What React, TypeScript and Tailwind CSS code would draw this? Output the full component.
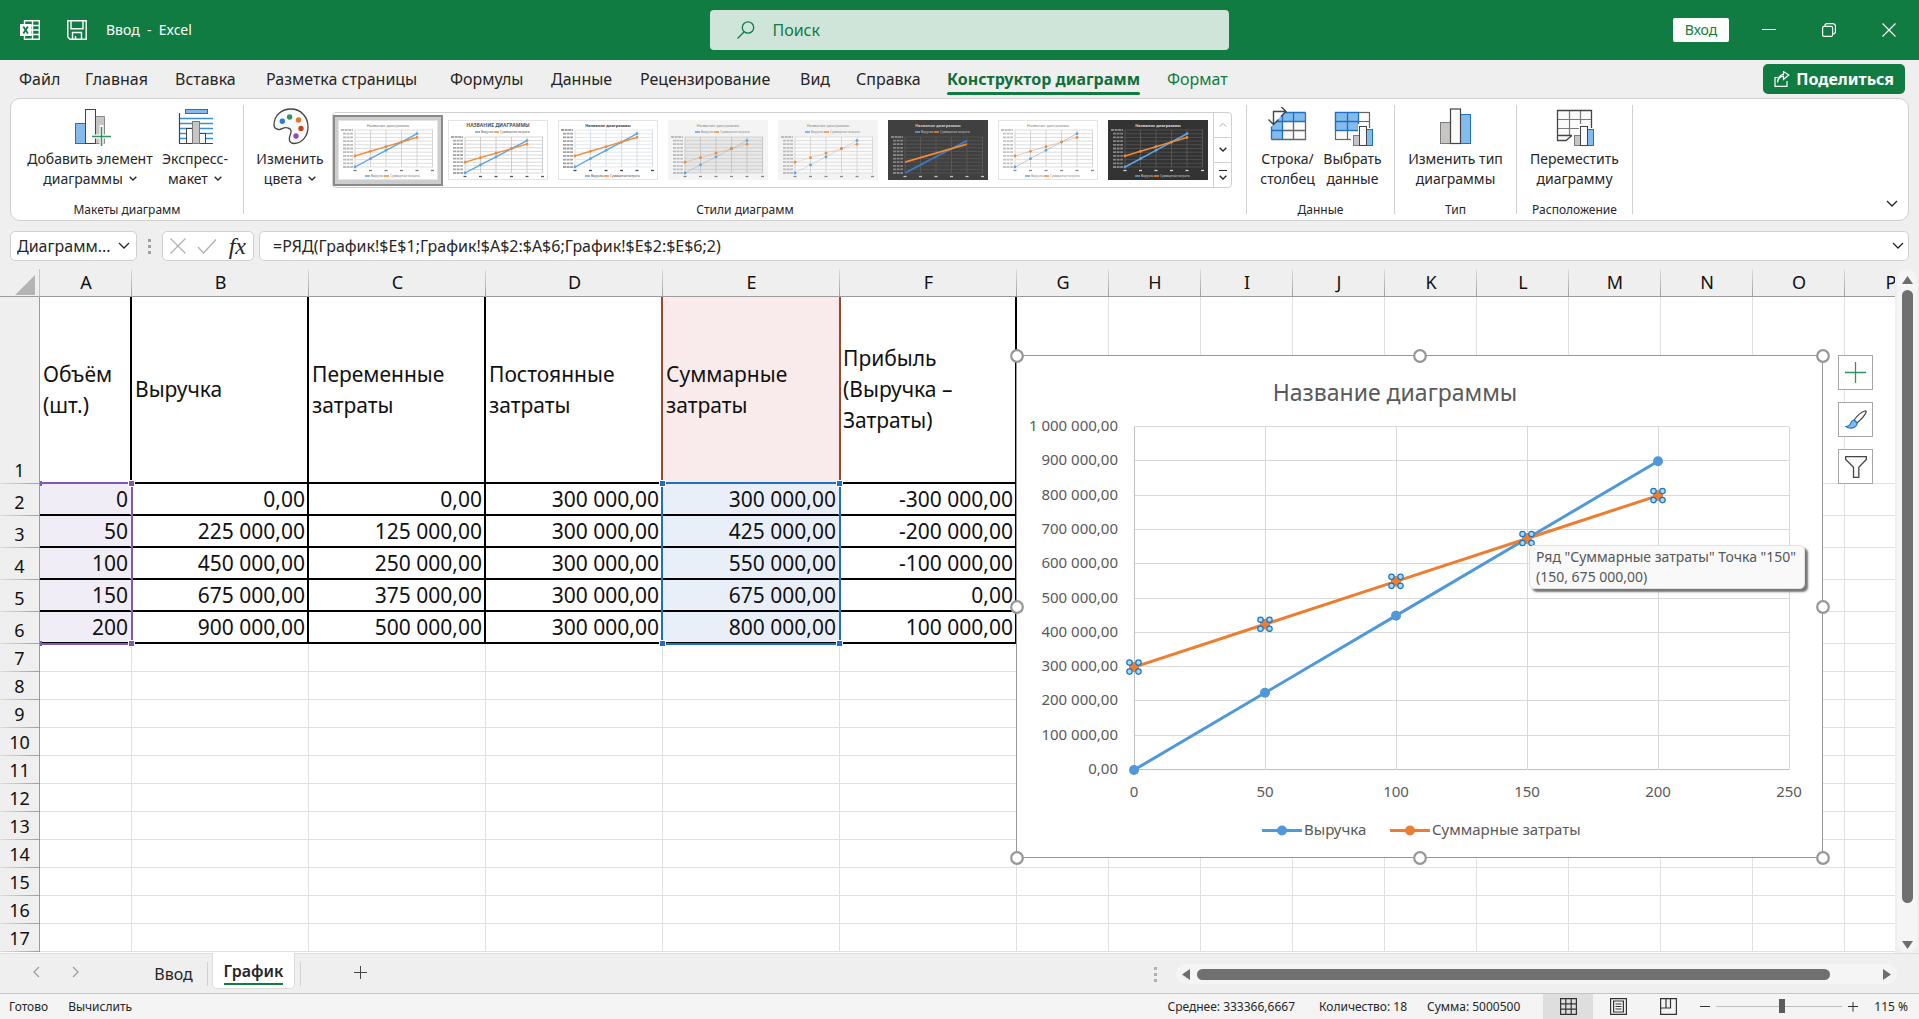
import type { ReactNode } from "react";
import clsx from "clsx";

type Row = [string, string, string, string, string, string];

const TABS = ["Файл", "Главная", "Вставка", "Разметка страницы", "Формулы", "Данные", "Рецензирование", "Вид", "Справка"];

const HEADERS: Row = [
  "Объём (шт.)",
  "Выручка",
  "Переменные затраты",
  "Постоянные затраты",
  "Суммарные затраты",
  "Прибыль (Выручка – Затраты)",
];

const ROWS: Row[] = [
  ["0", "0,00", "0,00", "300 000,00", "300 000,00", "-300 000,00"],
  ["50", "225 000,00", "125 000,00", "300 000,00", "425 000,00", "-200 000,00"],
  ["100", "450 000,00", "250 000,00", "300 000,00", "550 000,00", "-100 000,00"],
  ["150", "675 000,00", "375 000,00", "300 000,00", "675 000,00", "0,00"],
  ["200", "900 000,00", "500 000,00", "300 000,00", "800 000,00", "100 000,00"],
];

const COLUMNS = "ABCDEFGHIJKLMNOP".split("");
const EMPTY_ROWS = [7, 8, 9, 10, 11, 12, 13, 14, 15, 16, 17];

const REVENUE = [0, 225, 450, 675, 900];
const COSTS = [300, 425, 550, 675, 800];

const DARK = "#444444";
const BLUE = "#1f6fc4";
const LIGHT_BLUE = "#83bbec";

function Chevron({ className, up, bold }: { className?: string; up?: boolean; bold?: boolean }) {
  return (
    <svg viewBox="0 0 12 8" className={className} fill="none" stroke="currentColor" strokeWidth={bold ? 2 : 1.3}>
      <path d={up ? "M1 7l5-5 5 5" : "M1 1l5 5 5-5"} />
    </svg>
  );
}

/* Маленькая гистограмма в углу иконок */
function MiniBars() {
  return (
    <>
      <path d="M18 41V27h7V17h10v4h7v20z" fill="#fff" />
      <rect x="20.500" y="28.500" width="6" height="10" fill="#c8c6c4" stroke="#7a7a7a" />
      <rect x="33.500" y="22.500" width="6" height="16" fill={LIGHT_BLUE} stroke={BLUE} />
      <rect x="26.500" y="19.500" width="7" height="19" fill="#fafafa" stroke={DARK} />
    </>
  );
}

function AddElementIcon() {
  return (
    <svg viewBox="-3 0 40 40" className="size-10 shrink-0 overflow-visible">
      <rect x="2.500" y="16.500" width="10" height="20" fill={LIGHT_BLUE} stroke={BLUE} />
      <path d="M22.500 9.500h9v27h-9z" fill="#c8c6c4" stroke="#8a8a8a" />
      <rect x="12.500" y="2.500" width="10" height="34" fill="#fafafa" stroke={DARK} />
      <path d="M28.500 18v22M18 29.500h22" stroke="#fff" strokeWidth="4" />
      <path d="M28.500 20v19M19 29.500h19" stroke="#2e9460" strokeWidth="1.500" />
    </svg>
  );
}

function QuickLayoutIcon() {
  return (
    <svg viewBox="0 0 40 40" className="size-10 shrink-0">
      <path d="M5 11.500h33M5 16.500h33M5 21.500h33M5 26.500h33M5 31.500h33" stroke="#3a8fdc" strokeWidth="1.500" />
      <rect x="10.500" y="2.500" width="22" height="4" fill={LIGHT_BLUE} stroke={BLUE} />
      <path d="M4.500 6v30.500H38" fill="none" stroke={DARK} strokeWidth="1.200" />
      <rect x="11.500" y="21.500" width="6" height="15" fill="#fafafa" stroke={DARK} />
      <rect x="24.500" y="26.500" width="6" height="10" fill="#fafafa" stroke={DARK} />
      <rect x="17.500" y="14.500" width="7" height="22" fill="#c8c6c4" stroke="#7a7a7a" />
    </svg>
  );
}

function PaletteIcon() {
  return (
    <svg viewBox="0 0 40 40" className="size-10 shrink-0">
      <path
        d="M4 18C4 8 12 2 21 2c10 0 17 8 17 18 0 9-6 16.500-14 16.500-5 0-5.500-4.500-4-8 1.500-3.500 2-6.500-2-7.500-5-1.500-6 2-9.500 1.500C5.500 22 4 20.500 4 18z"
        fill="#fafafa"
        stroke={DARK}
        strokeWidth="1.300"
      />
      <circle cx="12.300" cy="14.200" r="2.700" fill="#2b7cd3" />
      <circle cx="19.600" cy="10" r="2.700" fill="#3a9160" />
      <circle cx="28.500" cy="13" r="2.700" fill="#e07a1f" />
      <circle cx="31" cy="21.500" r="2.700" fill="#c0471b" />
      <circle cx="26" cy="29" r="2.700" fill="#8b4db8" />
    </svg>
  );
}

function SwitchRowColumnIcon() {
  return (
    <svg viewBox="0 0 40 40" className="size-10 shrink-0">
      <rect x="3.500" y="5.500" width="34" height="27" fill="#fafafa" />
      <path d="M3.500 5.500h34v9h-23v18h-11z" fill={LIGHT_BLUE} />
      <path d="M25.500 14v18.500M14.500 23.500h23M3.500 32.500h34v-27" fill="none" stroke="#666" strokeWidth="1.300" />
      <path d="M14.500 5.500h23M3.500 5.500v27M14.500 5v27.500M25.500 5.500v9M3.500 14.500h34M3.500 23.500h11" stroke={BLUE} strokeWidth="1.300" />
      <path d="M-1-1h23L3 20h-4z" fill="#fff" />
      <path d="M5.500 17V4.500H18M.5 12.500l5 5 5-5M13-.5l5 5-5 5" fill="none" stroke={DARK} strokeWidth="1.400" />
    </svg>
  );
}

function SelectDataIcon() {
  return (
    <svg viewBox="0 0 40 40" className="size-10 shrink-0 overflow-visible">
      <rect x="2.500" y="5.500" width="34" height="27" fill="#fafafa" stroke="#666" strokeWidth="1.200" />
      <path d="M14.500 23v9.500M26 14.500h11M25.500 23v9.500M25.500 23.500h11" stroke="#666" strokeWidth="1.200" />
      <rect x="2.500" y="5.500" width="23" height="18" fill={LIGHT_BLUE} stroke={BLUE} strokeWidth="1.300" />
      <path d="M14.500 5.500v18M2.500 14.500h23" stroke={BLUE} strokeWidth="1.300" />
      <MiniBars />
    </svg>
  );
}

function ChangeTypeIcon() {
  return (
    <svg viewBox="0 0 40 40" className="size-10 shrink-0">
      <rect x="5.500" y="15.500" width="10" height="21" fill="#c8c6c4" stroke="#7a7a7a" />
      <rect x="25.500" y="7.500" width="10" height="29" fill={LIGHT_BLUE} stroke={BLUE} />
      <rect x="15.500" y="2" width="10" height="34.500" fill="#fafafa" stroke={DARK} strokeWidth="1.200" />
    </svg>
  );
}

function MoveChartIcon() {
  return (
    <svg viewBox="0 0 40 40" className="size-10 shrink-0 overflow-visible">
      <path d="M3.500 3.500h34v25h-34z" fill="#fafafa" />
      <path d="M15.500 3.500v25M26.500 3.500v25M3.500 12.500h34M3.500 21.500h34" stroke="#7a7a7a" strokeWidth="1.200" />
      <path d="M37.500 28.500v-25h-34v30H12l6-5H3.500" fill="none" stroke={DARK} strokeWidth="1.300" />
      <MiniBars />
    </svg>
  );
}

interface RibbonButtonProps {
  icon: ReactNode;
  top: string;
  bottom: string;
  menu?: boolean;
  className?: string;
}

function RibbonButton({ icon, top, bottom, menu, className }: RibbonButtonProps) {
  return (
    <button className={clsx("flex shrink-0 flex-col items-center pt-0.5 text-sm leading-5 whitespace-nowrap text-[#262626]", className)}>
      {icon}
      <span className="mt-0.5">{top}</span>
      <span className="flex items-center gap-1.5">
        {bottom}
        {menu && <Chevron bold className="w-2" />}
      </span>
    </button>
  );
}

function RibbonGroup({ label, className, children }: { label: string; className: string; children: ReactNode }) {
  return (
    <section className={clsx("my-1.5 flex shrink-0 flex-col justify-between border-r border-[#d0d0d0]", className)}>
      <div className="flex justify-center">{children}</div>
      <h2 className="text-center text-xs leading-2 text-[#262626]">{label}</h2>
    </section>
  );
}

interface ThumbStyle {
  bg: string;
  grid: string;
  text: string;
  plot?: string;
  legendTop?: boolean;
  line: number;
  markers: boolean;
  bold?: boolean;
  upper?: boolean;
}

const THUMBS: ThumbStyle[] = [
  { bg: "#ffffff", grid: "#d0d0d0", text: "#777777", line: 1.4, markers: true },
  { bg: "#ffffff", grid: "#c8c8c8", text: "#555555", line: 1.4, markers: true, legendTop: true, bold: true, upper: true },
  { bg: "#ffffff", grid: "#d5dcea", text: "#444444", line: 1.4, markers: true, bold: true },
  { bg: "#f4f4f4", grid: "#c4c4c4", plot: "#e8e8e8", text: "#888888", line: 0.4, markers: true, legendTop: true },
  { bg: "#f3f3f3", grid: "#d4d4d4", plot: "#fafafa", text: "#888888", line: 0.3, markers: true, legendTop: true },
  { bg: "#404040", grid: "#5a5a5a", text: "#c8c8c8", line: 1.8, markers: false, legendTop: true, bold: true },
  { bg: "#ffffff", grid: "#d0d0d0", text: "#888888", line: 0.5, markers: true },
  { bg: "#333333", grid: "#5a5a5a", text: "#d8d8d8", line: 1.6, markers: true, bold: true },
];

function Thumbnail({ style, selected }: { style: ThumbStyle; selected: boolean }) {
  const top = style.legendTop ? 17 : 10;
  const bottom = style.legendTop ? 53 : 47;
  const px = (i: number) => 17 + i * 15.5;
  const py = (v: number) => bottom - ((bottom - top) * v) / 1000;
  const points = (values: number[]) => values.map((v, i) => `${px(i)},${py(v)}`).join(" ");
  const legendY = style.legendTop ? 12 : 56;

  return (
    <button
      aria-label="Стиль диаграммы"
      className={clsx("flex h-[71px] w-[110px] items-center justify-center border-2", selected ? "border-[#8a8a8a] bg-[#cdcdcd]" : "border-transparent")}
    >
      <svg viewBox="0 0 100 60" className="h-15 w-25" fontFamily="Noto Sans, sans-serif">
        <rect x=".5" y=".5" width="99" height="59" fill={style.bg} stroke={style.bg === "#ffffff" ? "#e4e4e4" : style.bg} />
        <rect x="17" y={top} width="78" height={bottom - top} fill={style.plot ?? "none"} />
        {Array.from({ length: 11 }, (_, i) => (
          <g key={i}>
            <path d={`M17 ${py(i * 100)}h78`} stroke={style.grid} strokeWidth=".7" />
            <path d={`M${i === 10 ? 3 : 5} ${py(i * 100)}H15`} stroke={style.text} strokeWidth="1.800" strokeDasharray="3 .6" opacity=".5" />
          </g>
        ))}
        {Array.from({ length: 6 }, (_, i) => (
          <g key={i}>
            <path d={`M${px(i)} ${top}V${bottom}`} stroke={style.grid} strokeWidth=".9" />
            <path d={`M${px(i) - 1.5} ${bottom + 3.5}h3`} stroke={style.text} strokeWidth="1.300" />
          </g>
        ))}
        <polyline points={points(REVENUE)} fill="none" stroke={style.line < 1 ? "#999999" : style.legendTop && !style.markers ? "#3f78c4" : "#5ba5e6"} strokeWidth={style.line} />
        <polyline points={points(COSTS)} fill="none" stroke={style.line < 1 ? "#c8a080" : "#f08a35"} strokeWidth={style.line} />
        {style.markers &&
          REVENUE.map((v, i) => (
            <g key={i}>
              <circle cx={px(i)} cy={py(v)} r="1.400" fill="#5ba5e6" />
              <circle cx={px(i)} cy={py(COSTS[i])} r="1.400" fill="#f08a35" />
            </g>
          ))}
        <text x="50" y="7" textAnchor="middle" fontSize={style.upper ? 5 : 4} fontWeight={style.bold ? 700 : 400} fill={style.text}>
          {style.upper ? "НАЗВАНИЕ ДИАГРАММЫ" : "Название диаграммы"}
        </text>
        <path d={`M27 ${legendY}h5`} stroke="#5ba5e6" strokeWidth="1.500" />
        <path d={`M46 ${legendY}h5`} stroke="#f08a35" strokeWidth="1.500" />
        <text x="33" y={legendY + 1} fontSize="3" fill={style.text}>Выручка</text>
        <text x="52" y={legendY + 1} fontSize="3" fill={style.text}>Суммарные затраты</text>
      </svg>
    </button>
  );
}

function TitleBar() {
  return (
    <header className="flex h-15 shrink-0 items-center bg-[#107c41] text-white">
      <div className="flex flex-1 items-center pl-5">
        <svg viewBox="0 0 20 20" className="size-5">
          <path d="M4.500.8h14.800v18.400H4.500zM4.500 5.500h14.800M4.500 10h14.800M4.500 14.500h14.800M12.500.8v18.400" fill="none" stroke="#fff" strokeWidth="1.400" />
          <rect y="4" width="11.500" height="12" fill="#fff" />
          <path d="M3.300 6.500l4.600 7M7.900 6.500l-4.600 7" stroke="#107c41" strokeWidth="1.800" />
        </svg>
        <button aria-label="Сохранить" className="ml-[27px]">
          <svg viewBox="0 0 20 20" className="size-5" fill="none" stroke="#fff" strokeWidth="1.400">
            <path d="M.8.800h18.400v18.400H3L.8 17zM4 .8v8h12v-8M5.500 19v-6.500h9V19M8.500 19v-3" />
          </svg>
        </button>
        <h1 className="ml-[19px] text-sm whitespace-pre">{"Ввод  -  Excel"}</h1>
      </div>
      <label className="flex h-10 w-[27%] items-center rounded bg-[#cfe5d9] pl-[26px] text-[#107c41]">
        <svg viewBox="0 0 20 20" className="size-5" fill="none" stroke="currentColor" strokeWidth="1.300">
          <circle cx="12" cy="7.500" r="5.700" />
          <path d="M8 12l-6.500 6.500" />
        </svg>
        <input aria-label="Поиск" placeholder="Поиск" className="ml-4 flex-1 bg-transparent text-base outline-none placeholder:text-[#107c41]" />
      </label>
      <div className="flex flex-1 items-center justify-end">
        <button className="mr-2.5 h-6 w-14 rounded-xs bg-white text-sm text-[#107c41]">Вход</button>
        <button aria-label="Свернуть" className="flex w-15 justify-center">
          <svg viewBox="0 0 14 14" className="size-3.5" stroke="#fff"><path d="M0 6.500h14" /></svg>
        </button>
        <button aria-label="Свернуть в окно" className="flex w-15 justify-center">
          <svg viewBox="0 0 14 14" className="size-3.5" fill="none" stroke="#fff" strokeWidth="1.200">
            <rect x=".6" y="3.400" width="10" height="10" rx="1.500" />
            <path d="M3 3V2.500C3 1.500 3.500.6 5 .6h5.500c2 0 3 1 3 3v5c0 1.500-1 2.400-2.500 2.400" />
          </svg>
        </button>
        <button aria-label="Закрыть" className="flex w-15 justify-center">
          <svg viewBox="0 0 14 14" className="size-3.5" stroke="#fff" strokeWidth="1.200"><path d="M.5.5l13 13M13.500.5l-13 13" /></svg>
        </button>
      </div>
    </header>
  );
}

function TabBar() {
  return (
    <nav className="flex h-[38px] shrink-0 items-center justify-between pr-3.5 pl-[19px] text-base text-[#262626]">
      <div className="grid grid-cols-[66px_90px_91px_184px_101px_89px_160px_56px_91px_220px_60px] whitespace-nowrap">
        {TABS.map((tab) => (
          <button key={tab} className="text-left">{tab}</button>
        ))}
        <button className="relative justify-self-start text-left font-bold text-[#0f703b]">
          Конструктор диаграмм
          <span className="absolute inset-x-0 -bottom-1 h-[3px] rounded-full bg-[#107c41]" />
        </button>
        <button className="text-left text-[#107c41]">Формат</button>
      </div>
      <button className="flex h-[30px] items-center gap-1.5 rounded-[5px] bg-[#107c41] px-[11px] font-bold text-white">
        <svg viewBox="0 0 16 16" className="size-4" fill="none" stroke="currentColor" strokeWidth="1.200">
          <path d="M3.500 6.500H1v8.800h12V10M3.500 11.500c.5-4 2.500-6 6-6.300V8.500l5.300-4.500L9.500.6v2.600C6 4 3.800 6.500 3.500 11.500z" />
        </svg>
        Поделиться
      </button>
    </nav>
  );
}

function Ribbon() {
  return (
    <div className="mx-2.5 flex h-[123px] shrink-0 rounded-[10px] border border-[#d0d0d0] bg-white">
      <RibbonGroup label="Макеты диаграмм" className="w-[233px]">
        <RibbonButton className="w-[136px]" icon={<AddElementIcon />} top="Добавить элемент" bottom="диаграммы" menu />
        <RibbonButton className="w-[74px]" icon={<QuickLayoutIcon />} top="Экспресс-" bottom="макет" menu />
      </RibbonGroup>

      <RibbonGroup label="Стили диаграмм" className="w-[1003px]">
        <RibbonButton className="w-[84px]" icon={<PaletteIcon />} top="Изменить" bottom="цвета" menu />
        <div className="mt-[7px] mr-2.5 flex h-[76px] rounded border border-[#d0d0d0]">
          <div className="flex items-center">
            {THUMBS.map((style, i) => (
              <Thumbnail key={i} style={style} selected={i === 0} />
            ))}
          </div>
          <div className="flex w-[18px] flex-col divide-y divide-[#d0d0d0] border-l border-[#d0d0d0] text-[#262626]">
            <button aria-label="Предыдущая строка" className="flex flex-1 items-center justify-center text-[#a0a0a0]"><Chevron up className="w-2" /></button>
            <button aria-label="Следующая строка" className="flex flex-1 items-center justify-center"><Chevron bold className="w-2" /></button>
            <button aria-label="Все стили" className="flex flex-1 flex-col items-center justify-center gap-1">
              <span className="h-px w-2 bg-[#262626]" />
              <Chevron bold className="w-2" />
            </button>
          </div>
        </div>
      </RibbonGroup>

      <RibbonGroup label="Данные" className="w-[148px]">
        <RibbonButton className="w-[66px]" icon={<SwitchRowColumnIcon />} top="Строка/" bottom="столбец" />
        <RibbonButton className="mr-0.5 w-[64px]" icon={<SelectDataIcon />} top="Выбрать" bottom="данные" />
      </RibbonGroup>
      <RibbonGroup label="Тип" className="w-[122px]">
        <RibbonButton icon={<ChangeTypeIcon />} top="Изменить тип" bottom="диаграммы" />
      </RibbonGroup>
      <RibbonGroup label="Расположение" className="w-[116px]">
        <RibbonButton icon={<MoveChartIcon />} top="Переместить" bottom="диаграмму" />
      </RibbonGroup>
      <button aria-label="Свернуть ленту" className="mr-2.5 mb-3 ml-auto self-end text-[#262626]"><Chevron className="w-3" /></button>
    </div>
  );
}

function FormulaBar() {
  return (
    <div className="mx-2.5 mt-2.5 mb-2 flex h-[30px] shrink-0 text-base text-[#262626]">
      <div className="flex w-[127px] items-center rounded-[5px] border border-[#d0d0d0] bg-white px-1.5">
        <select aria-label="Имя" className="min-w-0 flex-1 appearance-none outline-none">
          <option>Диаграмм...</option>
        </select>
        <Chevron className="w-3" />
      </div>
      <div className="flex w-[25px] flex-col items-center justify-center gap-[3px]">
        <span className="size-[3px] bg-[#a0a0a0]" />
        <span className="size-[3px] bg-[#a0a0a0]" />
        <span className="size-[3px] bg-[#a0a0a0]" />
      </div>
      <div className="flex w-[92px] items-center justify-between rounded-[5px] border border-[#d0d0d0] bg-white px-[7px]">
        <button aria-label="Отмена"><svg viewBox="0 0 16 16" className="size-4" stroke="#b0b0b0" strokeWidth="1.200"><path d="M.5.5l15 15M15.500.5l-15 15" /></svg></button>
        <button aria-label="Ввод"><svg viewBox="0 0 20 16" className="h-4 w-5" fill="none" stroke="#b0b0b0" strokeWidth="1.300"><path d="M1 9l5.500 6L19 1.500" /></svg></button>
        <button aria-label="Вставить функцию" className="font-['Liberation_Serif',serif] text-2xl leading-6 italic">fx</button>
      </div>
      <div className="ml-[5px] flex flex-1 items-center rounded-[5px] border border-[#d0d0d0] bg-white pr-1 pl-[13px]">
        <input aria-label="Строка формул" className="flex-1 outline-none" defaultValue="=РЯД(График!$E$1;График!$A$2:$A$6;График!$E$2:$E$6;2)" />
        <Chevron className="w-3" />
      </div>
    </div>
  );
}

function RowHeader({ children }: { children: ReactNode }) {
  return (
    <th className="relative border-r border-[#9b9b9b] bg-[#efefef] p-0 align-bottom text-lg leading-7 font-normal">
      {children}
      <span className="absolute inset-x-0 bottom-0 h-px bg-linear-to-r from-[#dedede] to-[#a0a0a0]" />
    </th>
  );
}

function SheetTable() {
  return (
    <table className="w-[1937px] table-fixed border-separate border-spacing-0 bg-white text-[#111]">
      <colgroup>
        <col className="w-10" />
        <col className="w-[92px]" />
        {COLUMNS.slice(1, 6).map((c) => (
          <col key={c} className="w-[177px]" />
        ))}
        {COLUMNS.slice(6).map((c) => (
          <col key={c} className="w-[92px]" />
        ))}
      </colgroup>
      <thead>
        <tr className="h-7">
          <th className="border-r border-b border-r-[#c4c4c4] border-b-[#9b9b9b] bg-[#efefef] p-0">
            <svg viewBox="0 0 20 20" className="mt-1 mr-1 ml-auto size-5"><path d="M20 0v20H0z" fill="#b4b4b4" /></svg>
          </th>
          {COLUMNS.map((c) => (
            <th key={c} className="relative border-b border-[#9b9b9b] bg-[#efefef] p-0 text-lg leading-[27px] font-normal">
              {c}
              <span className="absolute inset-y-0 right-0 w-px bg-linear-to-b from-[#dedede] to-[#a0a0a0]" />
            </th>
          ))}
        </tr>
      </thead>
      <tbody>
        <tr className="h-[187px]">
          <RowHeader>1</RowHeader>
          {HEADERS.map((text, i) => (
            <td
              key={text}
              className={clsx(
                "border-r-2 border-b-2 border-black p-0 pl-[3px] align-middle text-[21px] leading-[31px]",
                i === 4 && "border-r-transparent bg-[#f9ebeb]",
              )}
            >
              {text}
            </td>
          ))}
          {COLUMNS.slice(6).map((c) => (
            <td key={c} className="border-r border-b border-[#e0e0e0] p-0" />
          ))}
        </tr>
        {ROWS.map((row, r) => (
          <tr key={r} className="h-8">
            <RowHeader>{r + 2}</RowHeader>
            {row.map((value, i) => (
              <td
                key={i}
                className={clsx(
                  "border-r-2 border-b-2 border-black p-0 pr-0.5 text-right text-[21px] leading-7",
                  i === 0 && "border-r-transparent bg-[#f1edf7]",
                  i === 4 && "border-r-transparent bg-[#e9eff8]",
                )}
              >
                {value}
              </td>
            ))}
            {COLUMNS.slice(6).map((c) => (
              <td key={c} className="border-r border-b border-[#e0e0e0] p-0" />
            ))}
          </tr>
        ))}
        {EMPTY_ROWS.map((n) => (
          <tr key={n} className="h-7">
            <RowHeader>{n}</RowHeader>
            {COLUMNS.map((c) => (
              <td key={c} className="border-r border-b border-[#e0e0e0] p-0" />
            ))}
          </tr>
        ))}
      </tbody>
    </table>
  );
}

/* Цветные рамки диапазонов, на которые ссылается ряд */
function RangeOutlines() {
  return (
    <>
      <div className="absolute top-7 left-[661px] h-[187px] w-[180px] border-x-2 border-[#a0452a]" />
      <div className="absolute top-[213px] left-10 h-[163px] w-[93px] border-y-2 border-r-2 border-[#8257b5]">
        <span className="absolute -top-[3px] -right-[3px] size-[5px] bg-[#8257b5] outline outline-white" />
        <span className="absolute -right-[3px] -bottom-[3px] size-[5px] bg-[#8257b5] outline outline-white" />
        <span className="absolute -top-[3px] left-0 h-[5px] w-0.5 bg-[#8257b5]" />
        <span className="absolute -bottom-[3px] left-0 h-[5px] w-0.5 bg-[#8257b5]" />
      </div>
      <div className="absolute top-[213px] left-[661px] h-[163px] w-[180px] border-2 border-[#1f6fc4]">
        <span className="absolute -top-[3px] -left-[3px] size-[5px] bg-[#1f6fc4] outline outline-white" />
        <span className="absolute -top-[3px] -right-[3px] size-[5px] bg-[#1f6fc4] outline outline-white" />
        <span className="absolute -bottom-[3px] -left-[3px] size-[5px] bg-[#1f6fc4] outline outline-white" />
        <span className="absolute -right-[3px] -bottom-[3px] size-[5px] bg-[#1f6fc4] outline outline-white" />
      </div>
    </>
  );
}

const X0 = 117;
const Y0 = 414;
const xAt = (i: number) => X0 + i * 131;
const yAt = (v: number) => Y0 - (v * 343) / 1000;
const linePoints = (values: number[]) => values.map((v, i) => `${xAt(i)},${yAt(v)}`).join(" ");
const axisLabel = (v: number) => (v === 0 ? "0,00" : v === 1000 ? "1 000 000,00" : `${v} 000,00`);

const HANDLES = [
  [0, 0], [403, 0], [806, 0],
  [0, 251], [806, 251],
  [0, 502], [403, 502], [806, 502],
];

function Chart() {
  return (
    <div className="absolute top-[87px] left-[1017px]">
      <svg viewBox="0 0 806 502" className="h-[502px] w-[806px] overflow-visible" fontFamily="Noto Sans, Liberation Sans, sans-serif" fill="#595959">
        <rect x="-.5" y="-.5" width="806" height="502" fill="#fff" stroke="#979797" />
        <text x="378" y="45" textAnchor="middle" fontSize="23">Название диаграммы</text>
        {Array.from({ length: 11 }, (_, i) => (
          <g key={i}>
            <path d={`M${X0} ${Math.round(yAt(i * 100)) - 0.5}h655`} stroke={i === 0 ? "#bfbfbf" : "#d9d9d9"} />
            <text x="101" y={yAt(i * 100) + 4} textAnchor="end" fontSize="15">{axisLabel(i * 100)}</text>
          </g>
        ))}
        {Array.from({ length: 6 }, (_, i) => (
          <g key={i}>
            <path d={`M${xAt(i) + 0.5} 71V414`} stroke={i === 0 ? "#bfbfbf" : "#d9d9d9"} />
            <text x={xAt(i)} y="441" textAnchor="middle" fontSize="15">{i * 50}</text>
          </g>
        ))}
        <polyline points={linePoints(REVENUE)} fill="none" stroke="#4f98d9" strokeWidth="3" />
        {REVENUE.map((v, i) => (
          <circle key={i} cx={xAt(i)} cy={yAt(v)} r="5" fill="#4f98d9" />
        ))}
        <polyline points={linePoints(COSTS)} fill="none" stroke="#ed7d31" strokeWidth="3" />
        {COSTS.map((v, i) => (
          <g key={i}>
            <rect x={xAt(i) - 5} y={yAt(v) - 5} width="10" height="10" fill="#7a7a7a" />
            <circle cx={xAt(i)} cy={yAt(v)} r="5" fill="#ed7d31" />
            {[-4.5, 4.5].map((dx) =>
              [-4.5, 4.5].map((dy) => (
                <circle key={`${dx}${dy}`} cx={xAt(i) + dx} cy={yAt(v) + dy} r="2.700" fill="#a8dcf8" stroke="#1c74c4" strokeWidth="1.200" />
              )),
            )}
          </g>
        ))}
        <path d="M245 474.500h40" stroke="#4f98d9" strokeWidth="3" />
        <circle cx="265" cy="474.500" r="5" fill="#4f98d9" />
        <text x="287" y="479" fontSize="15">Выручка</text>
        <path d="M373 474.500h40" stroke="#ed7d31" strokeWidth="3" />
        <circle cx="393" cy="474.500" r="5" fill="#ed7d31" />
        <text x="415" y="479" fontSize="15">Суммарные затраты</text>
        {HANDLES.map(([x, y]) => (
          <circle key={`${x}-${y}`} cx={x} cy={y} r="5.800" fill="#fff" stroke="#979797" strokeWidth="2.200" />
        ))}
      </svg>

      <div role="tooltip" className="absolute top-[189px] left-[512px] rounded-[5px] border border-[#e0e0e0] bg-[#f9f9f9] px-1.5 py-px pr-2 text-sm leading-5 whitespace-nowrap text-[#575757] shadow-[3px_3px_2px_#777]">
        <p>Ряд "Суммарные затраты" Точка "150"</p>
        <p>(150, 675 000,00)</p>
      </div>

      <div className="absolute top-[-1px] left-[821px] flex flex-col gap-3">
        <button aria-label="Элементы диаграммы" className="flex size-[35px] items-center justify-center border border-[#a6a6a6] bg-white">
          <svg viewBox="0 0 22 22" className="size-[22px]" stroke="#2e9460" strokeWidth="1.300"><path d="M10.500 0v21M0 10.500h21" /></svg>
        </button>
        <button aria-label="Стили диаграмм" className="flex size-[35px] items-center justify-center border border-[#a6a6a6] bg-white">
          <svg viewBox="0 0 22 22" className="size-[22px]" strokeWidth="1.200">
            <path d="M9 11C12 7 16 3 20 2c1-.2 1.500.5 1 1.500C19.500 7 15.500 11 12 14z" fill="#fafafa" stroke={DARK} />
            <path d="M9 11c-3 .5-3 3-4 4.500S2.500 17.500 1 17.500c3 2.500 8 2 10-.5 1-1.200 1.200-2 1-3.200z" fill={LIGHT_BLUE} stroke={BLUE} />
          </svg>
        </button>
        <button aria-label="Фильтры диаграммы" className="flex size-[35px] items-center justify-center border border-[#a6a6a6] bg-white">
          <svg viewBox="0 0 22 22" className="size-[22px]" fill="#fafafa" stroke={DARK} strokeWidth="1.300">
            <path d="M.7.700h20.600V3.500l-7.500 7.800V21.300H8.500V11.300L.7 3.500z" />
          </svg>
        </button>
      </div>
    </div>
  );
}

function VerticalScrollbar() {
  return (
    <div className="flex w-6 flex-col items-center bg-[#efefef]">
      <div className="flex h-full w-5 flex-col items-center rounded-full bg-[#f5f5f5] pt-[7px] pb-1">
        <svg viewBox="0 0 11 8" className="mb-1.5 w-[11px]"><path d="M5.500 0L11 8H0z" fill="#6e6e6e" /></svg>
        <div className="w-[11px] grow-[612] rounded-full bg-[#707070]" />
        <div className="grow-[38]" />
        <svg viewBox="0 0 11 8" className="w-[11px]"><path d="M5.500 8L11 0H0z" fill="#6e6e6e" /></svg>
      </div>
    </div>
  );
}

function SheetTabs() {
  return (
    <div className="flex h-10 shrink-0 items-start border-t border-[#dcdcdc] text-[#262626]">
      <div className="flex h-9 w-[140px] items-center gap-7 pl-[30px] text-[#a0a0a0]">
        <button aria-label="Предыдущий лист"><Chevron className="h-2 w-3 rotate-90" /></button>
        <button aria-label="Следующий лист"><Chevron className="h-2 w-3 -rotate-90" /></button>
      </div>
      <button className="mt-2 h-6 w-[68px] border-r border-[#d0d0d0] text-base leading-6">Ввод</button>
      <button className="-mt-px ml-1 flex h-9 w-[83px] flex-col items-center rounded-b-[5px] border border-t-0 border-[#dcdcdc] bg-white pt-1.5 text-base leading-6 font-semibold">
        <span className="border-b-2 border-[#107c41]">График</span>
      </button>
      <div className="mt-2 ml-[5px] h-6 w-px bg-[#d0d0d0]" />
      <button aria-label="Новый лист" className="mt-3 ml-[53px]">
        <svg viewBox="0 0 13 13" className="size-[13px]" stroke="#444"><path d="M6.500 0v13M0 6.500h13" /></svg>
      </button>
      <div className="mt-[13px] ml-auto flex flex-col gap-[3px]">
        <span className="size-[3px] bg-[#b0b0b0]" />
        <span className="size-[3px] bg-[#b0b0b0]" />
        <span className="size-[3px] bg-[#b0b0b0]" />
      </div>
      <div className="mt-2.5 mr-[22px] ml-[19px] flex h-5 w-[721px] items-center rounded-full bg-[#f5f5f5] px-1.5">
        <svg viewBox="0 0 8 11" className="h-[11px] w-2"><path d="M0 5.500L8 0v11z" fill="#6e6e6e" /></svg>
        <div className="ml-[7px] h-[11px] w-[633px] rounded-full bg-[#707070]" />
        <svg viewBox="0 0 8 11" className="ml-auto h-[11px] w-2"><path d="M8 5.500L0 0v11z" fill="#6e6e6e" /></svg>
      </div>
    </div>
  );
}

function StatusBar() {
  return (
    <footer className="flex h-[26px] shrink-0 items-center border-t border-[#c6c6c6] bg-[#f4f4f4] pr-[11px] pl-[9px] text-xs whitespace-nowrap text-[#262626]">
      <span>Готово</span>
      <span className="ml-5">Вычислить</span>
      <span className="ml-auto">Среднее: 333366,6667</span>
      <span className="ml-6">Количество: 18</span>
      <span className="ml-5">Сумма: 5000500</span>
      <div className="ml-[23px] flex h-full">
        <button aria-label="Обычный" className="flex w-[50px] items-center justify-center bg-[#dedede]">
          <svg viewBox="0 0 17 17" className="size-[17px]" fill="none" stroke="#333" strokeWidth="1.200"><path d="M.6.600h15.800v15.800H.6zM.6 5.800h15.800M.6 11.200h15.800M5.800.6v15.800M11.200.6v15.800" /></svg>
        </button>
        <button aria-label="Разметка страницы" className="flex w-[50px] items-center justify-center">
          <svg viewBox="0 0 17 17" className="size-[17px]" fill="none" stroke="#333" strokeWidth="1.200"><path d="M.6.600h15.800v15.800H.6zM3.600 3h9.800v11H3.600zM5.500 6h6M5.500 8.500h6M5.500 11h6" /></svg>
        </button>
        <button aria-label="Страничный режим" className="flex w-[50px] items-center justify-center">
          <svg viewBox="0 0 17 17" className="size-[17px]" fill="none" stroke="#333" strokeWidth="1.200"><path d="M.6.600h15.800v15.800H.6zM1 10h9.500V1M6 1v9" /></svg>
        </button>
      </div>
      <button aria-label="Уменьшить" className="ml-[7px]"><svg viewBox="0 0 10 10" className="size-2.5" stroke="#333"><path d="M0 4.500h10" /></svg></button>
      <input
        type="range"
        aria-label="Масштаб"
        min={10}
        max={210}
        defaultValue={115}
        className="mx-1.5 h-4 w-[126px] appearance-none bg-transparent [&::-webkit-slider-runnable-track]:h-px [&::-webkit-slider-runnable-track]:bg-[#bdbdbd] [&::-webkit-slider-thumb]:-mt-[7px] [&::-webkit-slider-thumb]:h-3.5 [&::-webkit-slider-thumb]:w-1.5 [&::-webkit-slider-thumb]:appearance-none [&::-webkit-slider-thumb]:bg-[#5c5c5c]"
      />
      <button aria-label="Увеличить"><svg viewBox="0 0 10 10" className="size-2.5" stroke="#333"><path d="M0 4.500h10M5 0v9.500" /></svg></button>
      <span className="ml-4">115 %</span>
    </footer>
  );
}

export default function App() {
  return (
    <div className="flex h-screen flex-col overflow-hidden bg-[#efefef] font-['Noto_Sans','Liberation_Sans',sans-serif]">
      <TitleBar />
      <TabBar />
      <Ribbon />
      <FormulaBar />
      <main className="flex min-h-0 flex-1">
        <div className="relative min-w-0 flex-1 overflow-hidden bg-white">
          <SheetTable />
          <RangeOutlines />
          <Chart />
        </div>
        <VerticalScrollbar />
      </main>
      <SheetTabs />
      <StatusBar />
    </div>
  );
}
